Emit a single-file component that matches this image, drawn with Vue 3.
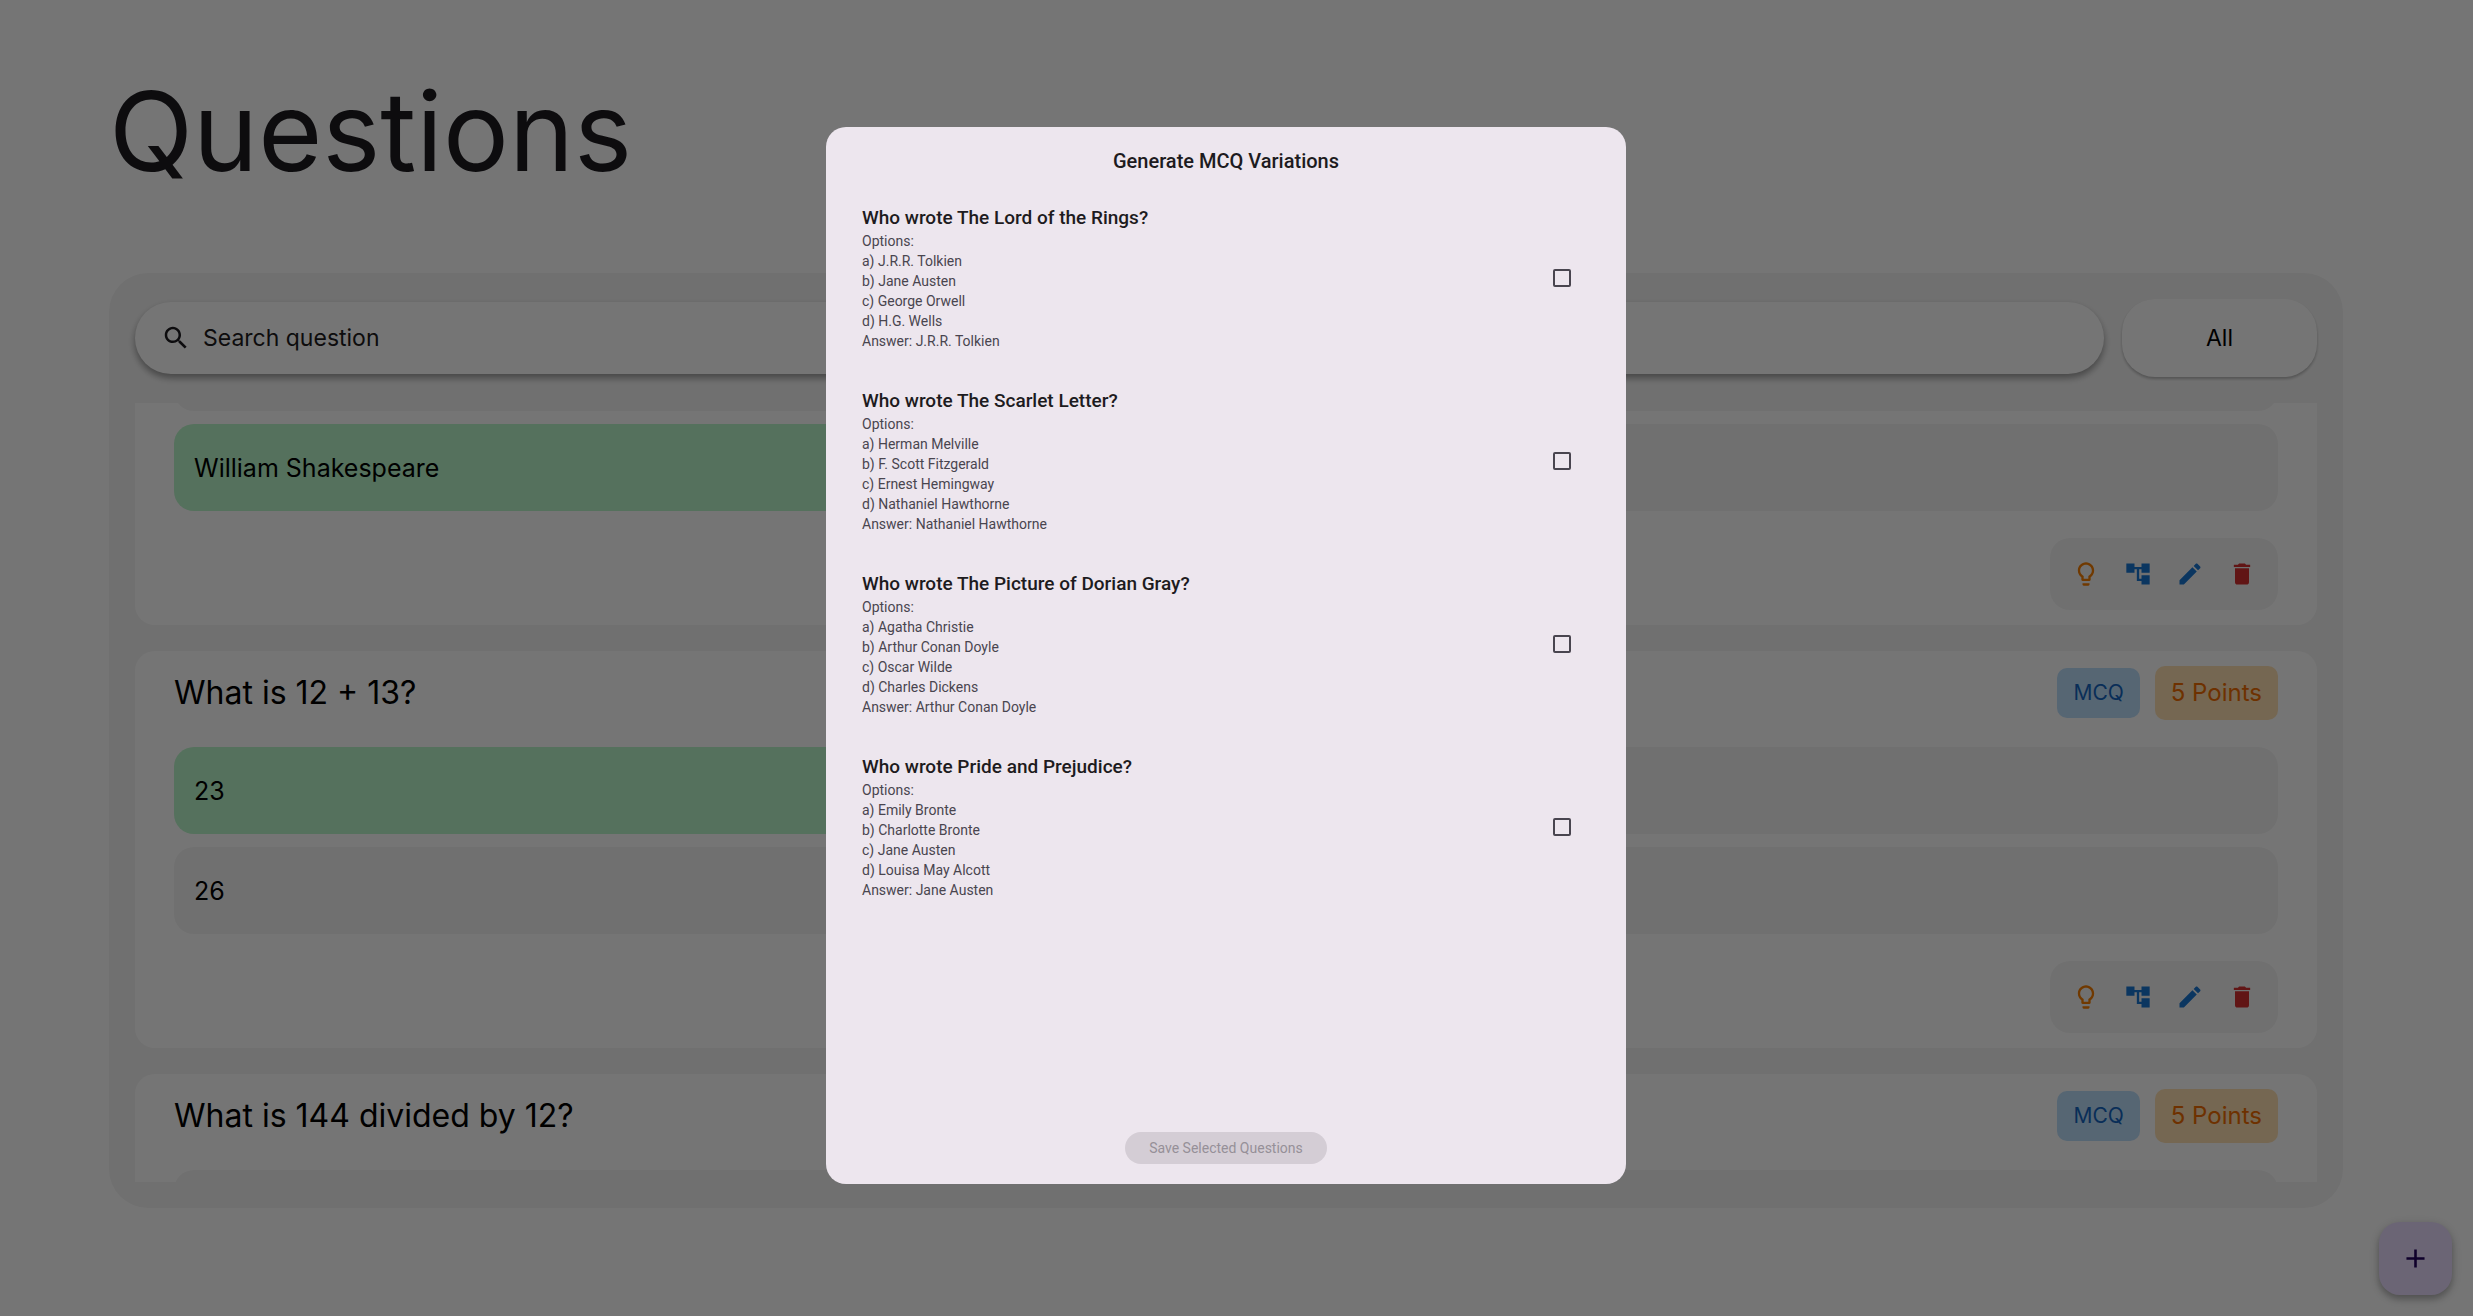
<template>
  <div class="page">
    <header class="page-header">
      <h1>Questions</h1>
    </header>

    <main class="panel">
      <div class="toolbar">
        <label class="search">
          <svg viewBox="0 0 24 24" aria-hidden="true"><path :d="icons.search" /></svg>
          <input v-model="search" type="text" placeholder="Search question" aria-label="Search question" />
        </label>
        <button type="button" class="filter">All</button>
      </div>

      <div ref="list" class="question-list">
        <article v-for="q in questions" :key="q.id" class="card">
          <div class="card-head">
            <template v-if="q.title">
              <h2>{{ q.title }}</h2>
              <span class="chip type">MCQ</span>
              <span class="chip points">5 Points</span>
            </template>
          </div>
          <div class="options">
            <div v-for="(option, i) in q.options" :key="i" class="option" :class="{ correct: i === q.correct }">{{ option }}</div>
          </div>
          <div class="actions">
            <button v-for="a in actions" :key="a.icon" type="button" :class="a.tone" :aria-label="a.label">
              <svg viewBox="0 0 24 24" aria-hidden="true"><path :d="icons[a.icon]" /></svg>
            </button>
          </div>
        </article>
      </div>
    </main>

    <button type="button" class="fab" aria-label="Add question">
      <svg viewBox="0 0 24 24" aria-hidden="true"><path :d="icons.add" /></svg>
    </button>

    <div class="overlay">
      <section class="dialog" role="dialog" aria-modal="true" aria-labelledby="dialog-title">
        <h2 id="dialog-title">Generate MCQ Variations</h2>
        <div class="variations">
          <label v-for="v in variations" :key="v.title" class="variation">
            <span class="variation-text">
              <strong>{{ v.title }}</strong>
              <span>Options:</span>
              <span v-for="(option, i) in v.options" :key="option">{{ 'abcd'[i] }}) {{ option }}</span>
              <span>Answer: {{ v.answer }}</span>
            </span>
            <input v-model="selected" type="checkbox" :value="v.title" />
          </label>
        </div>
        <button type="button" class="save" :disabled="!selected.length">Save Selected Questions</button>
      </section>
    </div>
  </div>
</template>

<script setup>
import { onMounted, ref } from 'vue';

const search = ref('');
const selected = ref([]);
const list = ref(null);

const questions = [
  { id: 1, title: '', options: ['', '', 'William Shakespeare', ''], correct: 2 },
  { id: 2, title: 'What is 12 + 13?', options: ['23', '', '26', ''], correct: 0 },
  { id: 3, title: 'What is 144 divided by 12?', options: ['', '', '', ''], correct: -1 },
];

const variations = [
  {
    title: 'Who wrote The Lord of the Rings?',
    options: ['J.R.R. Tolkien', 'Jane Austen', 'George Orwell', 'H.G. Wells'],
    answer: 'J.R.R. Tolkien',
  },
  {
    title: 'Who wrote The Scarlet Letter?',
    options: ['Herman Melville', 'F. Scott Fitzgerald', 'Ernest Hemingway', 'Nathaniel Hawthorne'],
    answer: 'Nathaniel Hawthorne',
  },
  {
    title: 'Who wrote The Picture of Dorian Gray?',
    options: ['Agatha Christie', 'Arthur Conan Doyle', 'Oscar Wilde', 'Charles Dickens'],
    answer: 'Arthur Conan Doyle',
  },
  {
    title: 'Who wrote Pride and Prejudice?',
    options: ['Emily Bronte', 'Charlotte Bronte', 'Jane Austen', 'Louisa May Alcott'],
    answer: 'Jane Austen',
  },
];

const actions = [
  { icon: 'bulb', tone: 'orange', label: 'Explain' },
  { icon: 'tree', tone: 'blue', label: 'Generate variations' },
  { icon: 'edit', tone: 'blue', label: 'Edit' },
  { icon: 'trash', tone: 'red', label: 'Delete' },
];

const icons = {
  search: 'M15.5 14h-.79l-.28-.27C15.41 12.59 16 11.11 16 9.5 16 5.91 13.09 3 9.5 3S3 5.91 3 9.5 5.91 16 9.5 16c1.61 0 3.09-.59 4.23-1.57l.27.28v.79l5 4.99L20.49 19l-4.99-5zm-6 0C7.01 14 5 11.99 5 9.5S7.01 5 9.5 5 14 7.01 14 9.5 11.99 14 9.5 14z',
  bulb: 'M9 21c0 .55.45 1 1 1h4c.55 0 1-.45 1-1v-1H9v1zm3-19C8.14 2 5 5.14 5 9c0 2.38 1.19 4.47 3 5.74V17c0 .55.45 1 1 1h6c.55 0 1-.45 1-1v-2.26c1.81-1.27 3-3.36 3-5.74 0-3.86-3.14-7-7-7zm2.85 11.1l-.85.6V16h-4v-2.3l-.85-.6C7.8 12.16 7 10.63 7 9c0-2.76 2.24-5 5-5s5 2.24 5 5c0 1.63-.8 3.16-2.15 4.1z',
  tree: 'M22 11V3h-7v3H9V3H2v8h7V8h2v10h4v3h7v-8h-7v3h-2V8h2v3z',
  edit: 'M3 17.25V21h3.75L17.81 9.94l-3.75-3.75L3 17.25zM20.71 7.04c.39-.39.39-1.02 0-1.41l-2.34-2.34c-.39-.39-1.02-.39-1.41 0l-1.83 1.83 3.75 3.75 1.83-1.83z',
  trash: 'M6 19c0 1.1.9 2 2 2h8c1.1 0 2-.9 2-2V7H6v12zM19 4h-3.5l-1-1h-5l-1 1H5v2h14V4z',
  add: 'M19 13h-6v6h-2v-6H5v-2h6V5h2v6h6v2z',
};

onMounted(() => {
  list.value.scrollTop = 175;
});
</script>

<style>
body { margin: 0; background: #fff; }
</style>

<style scoped>
.page { display: flex; flex-direction: column; height: 100vh; box-sizing: border-box; padding: 0 130px 108px 109px; font-family: Inter, "Open Sans", sans-serif; color: #000; overflow: hidden; }
button, input { font-family: inherit; }
button { border: 0; padding: 0; cursor: pointer; }
svg { display: block; fill: currentColor; }
h1, h2 { margin: 0; font-weight: 400; }

.page-header { display: flex; align-items: center; height: 273px; padding-bottom: 12px; box-sizing: border-box; flex: none; }
.page-header h1 { font-size: 110px; line-height: 126px; color: #1d1b20; }

.panel { display: flex; flex-direction: column; gap: 26px; flex: 1; min-height: 0; padding: 26px; border-radius: 39px; background: #f5f5f5; }
.toolbar { display: flex; align-items: center; gap: 18px; }
.search { display: flex; align-items: center; gap: 12px; flex: 1; height: 72px; padding: 0 26px; box-sizing: border-box; border-radius: 36px; background: #fff; color: #1d1b20; box-shadow: 0 4px 6px rgba(0, 0, 0, 0.28), 0 4px 10px rgba(0, 0, 0, 0.12); }
.search svg { width: 30px; height: 30px; }
.search input { flex: 1; border: 0; outline: 0; padding: 0; background: none; font-size: 23px; color: inherit; }
.search input::placeholder { color: inherit; opacity: 1; }
.filter { width: 195px; height: 78px; border-radius: 33px; background: #fff; font-size: 23px; color: #000; box-shadow: 0 2px 3px rgba(0, 0, 0, 0.26); }

.question-list { display: flex; flex-direction: column; gap: 26px; flex: 1; min-height: 0; overflow-y: auto; scrollbar-width: none; }
.card { display: flex; flex-direction: column; gap: 27px; flex: none; padding: 15px 39px; border-radius: 20px; background: #fff; }
.card-head { display: flex; align-items: center; gap: 15px; height: 54px; }
.card-head h2 { flex: 1; font-size: 32px; line-height: 40px; }
.chip { padding: 0 16px; border-radius: 10px; }
.chip.type { font-size: 21px; line-height: 50px; background: #bbdefb; color: #1565c0; }
.chip.points { font-size: 24px; line-height: 54px; background: #ffe0b2; color: #ef6c00; }
.options { display: grid; grid-template-columns: 1fr 1fr; gap: 13px; }
.option { display: flex; align-items: center; min-height: 87px; padding: 0 20px; box-sizing: border-box; border-radius: 20px; background: #f5f5f5; font-size: 25px; }
.option.correct { background: #b9f6ca; }
.actions { display: flex; align-self: flex-end; padding: 10px; border-radius: 20px; background: #f5f5f5; }
.actions button { display: grid; place-items: center; width: 52px; height: 52px; background: none; }
.actions svg { width: 28px; height: 28px; }
.orange { color: #f57c00; }
.blue { color: #1976d2; }
.red { color: #d32f2f; }

.fab { position: fixed; right: 21px; bottom: 21px; display: grid; place-items: center; width: 73px; height: 73px; border-radius: 21px; background: #eaddff; color: #21005d; box-shadow: 0 4px 6px rgba(0, 0, 0, 0.2), 0 3px 12px rgba(0, 0, 0, 0.18); }
.fab svg { width: 31px; height: 31px; }

.overlay { position: fixed; inset: 0; display: flex; justify-content: center; padding: 127px 21px 132px 0; background: rgba(0, 0, 0, 0.54); font-family: Roboto, sans-serif; }
.dialog { display: flex; flex-direction: column; align-items: center; width: 800px; box-sizing: border-box; padding: 20px; border-radius: 20px; background: #ede6ee; color: #1d1b20; }
.dialog h2 { font-size: 20px; line-height: 28px; font-weight: 500; }
.variations { display: flex; flex-direction: column; gap: 36px; flex: 1; min-height: 0; align-self: stretch; padding: 29px 16px 0; overflow-y: auto; }
.variation { display: flex; align-items: center; justify-content: space-between; padding-right: 19px; cursor: pointer; }
.variation-text { display: flex; flex-direction: column; font-size: 14px; line-height: 20px; color: #49454f; }
.variation-text strong { font-size: 19px; line-height: 27px; font-weight: 500; color: #1d1b20; }
.variation input { appearance: none; width: 18px; height: 18px; margin: 0; border: 2px solid #49454f; border-radius: 2px; }
.variation input:checked { background: #49454f; }
.save { height: 32px; padding: 0 24px; border-radius: 16px; background: #6750a4; color: #fff; font-size: 14px; line-height: 20px; }
.save:disabled { background: #d4cdd5; color: #969098; cursor: default; }
</style>
